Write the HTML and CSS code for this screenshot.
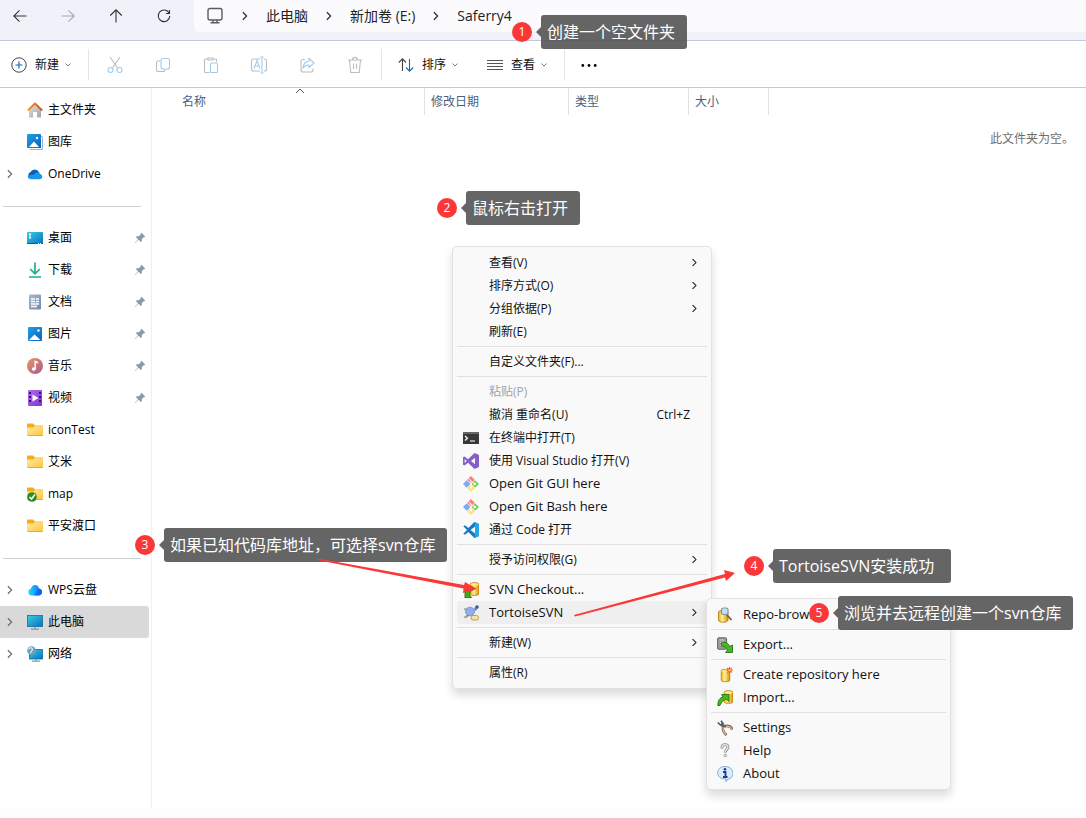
FILE: index.html
```html
<!DOCTYPE html>
<html lang="zh-CN">
<head>
  <meta charset="UTF-8" />
  <meta name="viewport" content="width=device-width, initial-scale=1" />
  <title>Saferry4</title>
  <link rel="stylesheet" href="styles.css">
</head>
<body>
  <!-- shared icons -->
  <svg class="defs" width="0" height="0" aria-hidden="true">
    <defs>
      <linearGradient id="gBlue" x1="0" y1="0" x2="1" y2="1"><stop offset="0" stop-color="#1fa0e8" /><stop offset="1" stop-color="#0a63bd" /></linearGradient>
      <linearGradient id="gTeal" x1="0" y1="0" x2="1" y2="1"><stop offset="0" stop-color="#35d0e4" /><stop offset="1" stop-color="#0c6fc0" /></linearGradient>
      <linearGradient id="gFolder" x1="0" y1="0" x2="1" y2="1"><stop offset="0" stop-color="#ffe9a6" /><stop offset="1" stop-color="#fcc53a" /></linearGradient>
      <linearGradient id="gHome" x1="0" y1="0" x2="1" y2="1"><stop offset="0" stop-color="#e2e2e2" /><stop offset="1" stop-color="#a4a4a4" /></linearGradient>
      <linearGradient id="gRoof" x1="0" y1="0" x2="1" y2="0"><stop offset="0" stop-color="#f59a2d" /><stop offset="1" stop-color="#dc4f1c" /></linearGradient>
      <linearGradient id="gMusic" x1="0" y1="0" x2="1" y2="1"><stop offset="0" stop-color="#f0935a" /><stop offset="1" stop-color="#a55a9c" /></linearGradient>
      <linearGradient id="gVideo" x1="0" y1="0" x2="1" y2="1"><stop offset="0" stop-color="#b46cf0" /><stop offset="1" stop-color="#7a35d0" /></linearGradient>
      <linearGradient id="gDoc" x1="0" y1="0" x2="1" y2="1"><stop offset="0" stop-color="#a9bccd" /><stop offset="1" stop-color="#6f8aa6" /></linearGradient>
      <linearGradient id="gDb" x1="0" y1="0" x2="1" y2="0"><stop offset="0" stop-color="#f2b211" /><stop offset=".4" stop-color="#ffef96" /><stop offset="1" stop-color="#dc9107" /></linearGradient>
      <linearGradient id="gWps" x1="0" y1="0" x2="1" y2="0"><stop offset="0" stop-color="#1ee0e6" /><stop offset=".5" stop-color="#1c9bff" /><stop offset="1" stop-color="#0b5cf0" /></linearGradient>
    </defs>
    <symbol id="i-right" viewBox="0 0 8 8"><path d="M2.300 1 5.300 4 2.300 7" fill="none" stroke="currentColor" stroke-width=".9" /></symbol>
    <symbol id="i-down" viewBox="0 0 8 8"><path d="M1.500 2.500 4 5l2.500-2.500" fill="none" stroke="currentColor" /></symbol>
    <symbol id="i-pin" viewBox="0 0 12 12"><path d="M7.500.8 11.200 4.500l-.8.8-.7-.1-2 2 .1 2-.9.9-2.400-2.300L1.300 11 .9 10.700l3.200-3.300-2.300-2.300.9-.9 2.100.1 2-2-.1-.7z" fill="#8d99a3" /></symbol>
    <symbol id="i-folder" viewBox="0 0 16 16"><path d="M0 2.500A1 1 0 0 1 1 1.500h5l2 2h7a1 1 0 0 1 1 1V8H0z" fill="#f5ad12" /><path d="M0 5.500h6.500L8 4h7.500a.5.5 0 0 1 .5.500V13a1 1 0 0 1-1 1H1a1 1 0 0 1-1-1z" fill="url(#gFolder)" /><path d="M.5 13.500h15" stroke="#e6a51c" stroke-width=".8" /></symbol>
    <symbol id="i-git" viewBox="0 0 16 16">
      <path d="M8 0l3.800 3.800L8 7.600 4.200 3.800z" fill="#ff7f7f" /><path d="M3.800 4.200 7.600 8l-3.800 3.800L0 8z" fill="#7baaf7" />
      <path d="M8 8.400l3.800 3.800L8 16l-3.800-3.800z" fill="#ffe27a" /><path d="M12.200 4.200 16 8l-3.800 3.800L8.400 8z" fill="#80cf5c" />
      <path d="M5.500 2.500 8 5v6M8 5l3.500 3" fill="none" stroke="#fff" stroke-width=".9" /><circle cx="11.800" cy="8" r="1.200" fill="#fff" /><circle cx="8" cy="11.500" r="1.100" fill="#fff" />
    </symbol>
    <symbol id="i-db" viewBox="0 0 10 14"><path d="M.5 2.500C.5 0 9.500 0 9.500 2.500v9c0 2.500-9 2.500-9 0z" fill="url(#gDb)" stroke="#b07608" stroke-width=".8" /><ellipse cx="5" cy="2.600" rx="4" ry="1.400" fill="#ffe773" /></symbol>
  </svg>

  <header class="nav">
    <button class="nav-btn" aria-label="后退"><svg width="16" height="16" viewBox="0 0 16 16"><path d="M14.500 8H2M7.500 2.300 1.800 8l5.700 5.700" /></svg></button>
    <button class="nav-btn off" aria-label="前进"><svg width="16" height="16" viewBox="0 0 16 16"><path d="M1.500 8H14M8.500 2.300 14.200 8l-5.700 5.700" /></svg></button>
    <button class="nav-btn" aria-label="向上"><svg width="16" height="16" viewBox="0 0 16 16"><path d="M8 14.500V2M2.300 7.500 8 1.800l5.700 5.700" /></svg></button>
    <button class="nav-btn" aria-label="刷新"><svg width="16" height="16" viewBox="0 0 16 16"><path d="M13.200 5.200A5.800 5.800 0 1 0 13.800 8M13.500 2v3.500H10" /></svg></button>
    <nav class="address">
      <svg width="18" height="18" viewBox="0 0 18 18" fill="none" stroke="#5c5c5c" stroke-width="1.400"><rect x="2" y="1.500" width="14" height="11.500" rx="2" /><path d="M7 13v2.500M11 13v2.500M4.500 15.800h9" /></svg>
      <svg class="sep" width="10" height="10"><use href="#i-right" /></svg>
      <a href="#">此电脑</a>
      <svg class="sep" width="10" height="10"><use href="#i-right" /></svg>
      <a href="#">新加卷 (E:)</a>
      <svg class="sep" width="10" height="10"><use href="#i-right" /></svg>
      <a href="#">Saferry4</a>
    </nav>
  </header>

  <div class="toolbar">
    <div class="group group-new">
      <button class="tool"><svg width="16" height="16" viewBox="0 0 16 16" fill="none"><circle cx="8" cy="8" r="7.200" stroke="#444" /><path d="M8 4.500v7M4.500 8h7" stroke="#0b6cc4" stroke-width="1.200" /></svg>新建<svg width="8" height="8" class="drop"><use href="#i-down" /></svg></button>
    </div>
    <div class="group group-edit">
      <button class="icon-btn" disabled aria-label="剪切"><svg width="16" height="18" viewBox="0 0 16 18"><path d="M3 1l7.500 11M13 1 5.500 12" /><g class="b"><circle cx="3.500" cy="14" r="2.500" /><circle cx="12.500" cy="14" r="2.500" /></g></svg></button>
      <button class="icon-btn" disabled aria-label="复制"><svg width="16" height="18" viewBox="0 0 16 18"><path d="M5 5H3.500a2 2 0 0 0-2 2v6.500a2 2 0 0 0 2 2H8a2 2 0 0 0 2-2" /><rect class="b" x="6" y="2.500" width="8.500" height="10.500" rx="2" /></svg></button>
      <button class="icon-btn" disabled aria-label="粘贴"><svg width="16" height="18" viewBox="0 0 16 18"><path d="M6.500 16.500h-4a1 1 0 0 1-1-1V4a1 1 0 0 1 1-1H5M10 3h2.500a1 1 0 0 1 1 1v2M5 2h5v2H5z" /><rect class="b" x="7.500" y="7" width="7" height="9.500" rx="1" /></svg></button>
      <button class="icon-btn" disabled aria-label="重命名"><svg width="18" height="18" viewBox="0 0 18 18"><path d="M10 3H3.500a2 2 0 0 0-2 2v8a2 2 0 0 0 2 2H10M14 3h.5a2 2 0 0 1 2 2v8a2 2 0 0 1-2 2H14" /><path class="b" d="M12 1v16M10.500 1h3M10.500 17h3M4 12.500l3-8 3 8M5 10h4" /></svg></button>
      <button class="icon-btn" disabled aria-label="共享"><svg width="16" height="18" viewBox="0 0 16 18"><path d="M6 3.500H4a2 2 0 0 0-2 2V14a2 2 0 0 0 2 2h8a2 2 0 0 0 2-2v-1.500" /><path class="b" d="M10 2.500 15 7l-5 4.500V9c-3 0-4.500 1-6 3 .3-4 2.300-6.500 6-7z" /></svg></button>
      <button class="icon-btn" disabled aria-label="删除"><svg width="16" height="18" viewBox="0 0 16 18"><path d="M1 4h14M5.500 4c0-3.500 5-3.500 5 0M2.500 4l1.300 12.500h8.400L13.500 4M6.500 7.500v5.500M9.500 7.500v5.500" /></svg></button>
    </div>
    <div class="group group-view">
      <button class="tool"><svg width="16" height="16" viewBox="0 0 16 16" fill="none" stroke-width="1.100"><path d="M4.500 14V2M.8 5.500 4.500 1.800l3.500 3.700" stroke="#444" /><path d="M11.500 2v12M8 10.500l3.500 3.700 3.700-3.700" stroke="#0b6cc4" /></svg>排序<svg width="8" height="8" class="drop"><use href="#i-down" /></svg></button>
      <button class="tool"><svg width="16" height="16" viewBox="0 0 16 16" stroke="#555"><path d="M0 3.500h16M0 6.500h16M0 9.500h16M0 12.500h16" /></svg>查看<svg width="8" height="8" class="drop"><use href="#i-down" /></svg></button>
    </div>
    <button class="tool more" aria-label="更多"><svg width="16" height="16" viewBox="0 0 16 16"><circle cx="1.800" cy="8.500" r="1.400" /><circle cx="8" cy="8.500" r="1.400" /><circle cx="14.200" cy="8.500" r="1.400" /></svg></button>
  </div>

  <div class="content">
    <aside class="sidebar">
      <a class="place" href="#"><svg class="icon" viewBox="0 0 16 16"><path d="M2 7l6-5.500L14 7v8.500h-4V10H6v5.500H2z" fill="url(#gHome)" /><path d="M.8 8.500 8 1.500l7.200 7" fill="none" stroke="url(#gRoof)" stroke-width="2" stroke-linejoin="round" /></svg>主文件夹</a>
      <a class="place" href="#"><svg class="icon" viewBox="0 0 16 16"><path d="M3 2.500h12.500v13H3z" fill="#1c6fc0" /><path d="M2.500 14.500h12V3" fill="none" stroke="#fff" /><rect width="14" height="14" rx="1" fill="url(#gBlue)" /><path d="M2 13l5-5.500 5 5.500z" fill="#fff" /><circle cx="10" cy="4" r="1.200" fill="#fff" /></svg>图库</a>
      <a class="place" href="#"><svg class="arrow" viewBox="0 0 8 8"><use href="#i-right" /></svg><svg class="icon" viewBox="0 0 16 16"><path d="M3.500 12.500a3.500 3.500 0 0 1 0-6.500A4.800 4.800 0 0 1 12 6l1 5z" fill="#0f5fb8" /><path d="M7 8.500C9 5.500 12.500 6 13 8a2.700 2.700 0 0 1 .2 5.300H4C1 13 .5 11 1 9.500z" fill="#1a96e8" /></svg>OneDrive</a>
      <hr>
      <a class="place" href="#"><svg class="icon" viewBox="0 0 16 16"><rect y="2" width="16" height="12" rx="1" fill="url(#gTeal)" /><path d="M2 4.500h2M2 7.500h2" stroke="#fff" stroke-width="1.800" /><path d="M0 13.500h16" stroke="#0b5c9c" /><path d="M11 13.500h1M13 13.500h1" stroke="#fff" /></svg>桌面<svg class="pin"><use href="#i-pin" /></svg></a>
      <a class="place" href="#"><svg class="icon" viewBox="0 0 16 16" fill="none" stroke="#1cae8c" stroke-width="1.700"><path d="M8 .5v11M3.200 7 8 11.800 12.800 7M2 15h12" /></svg>下载<svg class="pin"><use href="#i-pin" /></svg></a>
      <a class="place" href="#"><svg class="icon" viewBox="0 0 16 16"><rect x="2" y=".5" width="12" height="15" rx="1" fill="url(#gDoc)" /><path d="M4 5h4M4 7.500h4M4 10h8M4 12.500h6M9 5h3M9 7.500h3" stroke="#fff" stroke-width="1.300" /></svg>文档<svg class="pin"><use href="#i-pin" /></svg></a>
      <a class="place" href="#"><svg class="icon" viewBox="0 0 16 16"><rect x="1" y="1" width="14" height="14" rx="1" fill="url(#gBlue)" /><path d="M2 14l5.500-5.500L13.500 14z" fill="#fff" /><circle cx="11.500" cy="4.500" r="1.200" fill="#fff" /></svg>图片<svg class="pin"><use href="#i-pin" /></svg></a>
      <a class="place" href="#"><svg class="icon" viewBox="0 0 16 16"><circle cx="8" cy="8" r="8" fill="url(#gMusic)" /><ellipse cx="6.800" cy="11" rx="2" ry="1.700" fill="#fff" /><path d="M8.200 11V3.500l2.800 1.300" fill="none" stroke="#fff" stroke-width="1.500" /></svg>音乐<svg class="pin"><use href="#i-pin" /></svg></a>
      <a class="place" href="#"><svg class="icon" viewBox="0 0 16 16"><rect x="1" width="14" height="16" rx="1" fill="url(#gVideo)" /><path d="M3 2v12M13 2v12" stroke="#3b1377" stroke-width="2" stroke-dasharray="2 2" /><path d="M5.500 4.500 11.500 8l-6 3.500z" fill="#fff" /></svg>视频<svg class="pin"><use href="#i-pin" /></svg></a>
      <a class="place" href="#"><svg class="icon"><use href="#i-folder" /></svg>iconTest</a>
      <a class="place" href="#"><svg class="icon"><use href="#i-folder" /></svg>艾米</a>
      <a class="place" href="#"><svg class="icon" viewBox="0 0 16 16"><use href="#i-folder" width="16" height="16" /><circle cx="5" cy="11" r="4.800" fill="#2d8a1c" /><path d="M2.500 11l2 2L8 8.500" fill="none" stroke="#fff" stroke-width="1.600" /></svg>map</a>
      <a class="place" href="#"><svg class="icon"><use href="#i-folder" /></svg>平安渡口</a>
      <hr>
      <a class="place" href="#"><svg class="arrow" viewBox="0 0 8 8"><use href="#i-right" /></svg><svg class="icon" viewBox="0 0 16 16"><path d="M4.500 13.500a3.500 3.500 0 0 1-.7-6.800C4.500 2 11 1.500 12 6.500c4 .5 4 6.500 0 7z" fill="url(#gWps)" /><path d="M7 13.500 12 6.500c4 .5 4 6.500 0 7z" fill="#0d5bee" opacity=".6" /></svg>WPS云盘</a>
      <a class="place active" href="#"><svg class="arrow" viewBox="0 0 8 8"><use href="#i-right" /></svg><svg class="icon" viewBox="0 0 16 16"><rect x=".5" y="1.500" width="15" height="11" fill="url(#gTeal)" stroke="#0e6ea0" stroke-width=".8" /><path d="M8 13v2M4 15.200h8" stroke="#8696a3" stroke-width="1.200" /></svg>此电脑</a>
      <a class="place" href="#"><svg class="arrow" viewBox="0 0 8 8"><use href="#i-right" /></svg><svg class="icon" viewBox="0 0 16 16"><rect x="2.500" y="3.500" width="13" height="9.500" fill="url(#gTeal)" stroke="#0e6ea0" stroke-width=".8" /><path d="M9 13v2M5 15.200h8" stroke="#8696a3" stroke-width="1.200" /><circle cx="4.500" cy="4.500" r="4.300" fill="#6d9dbb" /><path d="M1.500 3.500C3 1 5 1.500 5.500 3S3 5.500 3.500 7.500" fill="none" stroke="#cfe6f2" stroke-width="1.400" /></svg>网络</a>
    </aside>

    <main class="files">
      <table>
        <thead>
          <tr>
            <th class="col-name">名称<svg class="caret" width="10" height="6" viewBox="0 0 10 6"><path d="M1 5l4-4 4 4" fill="none" stroke="#555" /></svg></th>
            <th class="col-date">修改日期</th>
            <th class="col-type">类型</th>
            <th class="col-size">大小</th>
            <th class="col-rest"></th>
          </tr>
        </thead>
        <tbody>
          <tr><td class="empty" colspan="5">此文件夹为空。</td></tr>
        </tbody>
      </table>
    </main>
  </div>
  <footer class="status"></footer>

  <ul class="menu main-menu">
    <li><button><span class="ico"></span>查看(V)<svg class="more-arrow"><use href="#i-right" /></svg></button></li>
    <li><button><span class="ico"></span>排序方式(O)<svg class="more-arrow"><use href="#i-right" /></svg></button></li>
    <li><button><span class="ico"></span>分组依据(P)<svg class="more-arrow"><use href="#i-right" /></svg></button></li>
    <li><button><span class="ico"></span>刷新(E)</button></li>
    <li class="line"></li>
    <li><button><span class="ico"></span>自定义文件夹(F)...</button></li>
    <li class="line"></li>
    <li><button disabled><span class="ico"></span>粘贴(P)</button></li>
    <li><button><span class="ico"></span>撤消 重命名(U)<span class="key">Ctrl+Z</span></button></li>
    <li><button><svg class="ico" viewBox="0 0 16 16"><rect y="2" width="16" height="12" fill="#383838" /><path d="M0 2h16v2H0z" fill="#666" /><path d="M2 6l2.500 2.300L2 10.500M7 11h5" fill="none" stroke="#fff" stroke-width="1.200" /></svg>在终端中打开(T)</button></li>
    <li><button><svg class="ico" viewBox="0 0 16 16"><path d="M11.500 0 16 2v12l-4.500 2L5 9.800 1.500 12.500 0 11.800V4.200l1.500-.7L5 6.200zM12 4.800 8 8l4 3.200zM1.700 6v4L3.700 8z" fill="#865fc5" fill-rule="evenodd" /></svg>使用 Visual Studio 打开(V)</button></li>
    <li><button class="latin"><svg class="ico"><use href="#i-git" /></svg>Open Git GUI here</button></li>
    <li><button class="latin"><svg class="ico"><use href="#i-git" /></svg>Open Git Bash here</button></li>
    <li><button><svg class="ico" viewBox="0 0 16 16"><path d="M11.500 0 16 2v12l-4.500 2L5.300 10 2 12.700.3 11.800 4 8 .3 4.200 2 3.300 5.300 6zM12 4.500 7.500 8l4.500 3.500z" fill="#1379c0" fill-rule="evenodd" /><path d="M12 .2 16 2v12l-4 1.800z" fill="#27a3e8" /></svg>通过 Code 打开</button></li>
    <li class="line"></li>
    <li><button><span class="ico"></span>授予访问权限(G)<svg class="more-arrow"><use href="#i-right" /></svg></button></li>
    <li class="line"></li>
    <li><button class="latin"><svg class="ico" viewBox="0 0 16 16"><use href="#i-db" x="6.500" y="0" width="10" height="14" /><path d="M10 5C8 5 5 6.500 4.500 10L2 8.500V16h6.500L6.500 12.500C7 10 8 8.500 10 8z" fill="#3fae14" stroke="#17670a" stroke-width=".8" /></svg>SVN Checkout...</button></li>
    <li class="open">
      <button class="latin"><svg class="ico" viewBox="0 0 16 16"><path d="M2 4l3 2M11.500 4l3-2.500M2.500 12.500l3-3M12 5.500l2-3" stroke="#6b86b5" stroke-width="2" /><circle cx="14" cy="2" r="1.800" fill="#39688e" /><ellipse cx="7" cy="6.500" rx="4.500" ry="4.300" fill="#91aeea" stroke="#6680bd" stroke-width=".7" /><path d="M1 3.500 3 5M1 12.500l3-1.500" stroke="#a7a7a7" stroke-width="1.500" /><rect x="8" y="10.500" width="7.500" height="4.500" rx="2" fill="#f8e39a" stroke="#a98a4b" stroke-width=".8" /></svg>TortoiseSVN<svg class="more-arrow"><use href="#i-right" /></svg></button>
      <ul class="menu sub-menu">
        <li><button class="latin"><svg class="ico" viewBox="0 0 16 16"><path d="M1.500 5C1.500 3 11 3 11 5v8c0 3-9.500 3-9.500 0z" fill="url(#gDb)" stroke="#b07608" stroke-width=".8" /><path d="M10 8l4.500 5" stroke="#7c583a" stroke-width="1.800" /><rect x="4.500" y="1" width="6.500" height="6.500" rx="2" fill="#c8e0f4" stroke="#7b94ac" stroke-width="1.200" /></svg>Repo-browser</button></li>
        <li class="line"></li>
        <li><button class="latin"><svg class="ico" viewBox="0 0 16 16"><rect x=".6" y=".8" width="9" height="11.500" rx="1" fill="#999" stroke="#666" /><path d="M2.500 3h5M2.500 5.500h5M2.500 8h3" stroke="#cfcfcf" /><path d="M4 6c4-1.500 7.500 0 8.500 3.500L15.500 8v7.500H8.500L10.500 13C9.500 10.500 7.500 9.500 4.500 9z" fill="#4ab81c" stroke="#176a0b" stroke-width=".8" /></svg>Export...</button></li>
        <li class="line"></li>
        <li><button class="latin"><svg class="ico" viewBox="0 0 16 16"><use href="#i-db" x="3.500" y="1.500" width="10" height="14" /><path d="M12.500 0v6.500M9.300 3.300h6.500M10.300 1l4.500 4.500M14.800 1l-4.500 4.500" stroke="#f3552c" stroke-width="1.100" /><circle cx="12.500" cy="3.300" r="1.200" fill="#ffc64b" /></svg>Create repository here</button></li>
        <li><button class="latin"><svg class="ico" viewBox="0 0 16 16"><use href="#i-db" x="6.500" y="0" width="10" height="14" /><path d="M.8 15.500C.8 10 3 7.500 6 7L4.500 4.500H12v7L9.500 9.500C6.500 9.500 4.500 12 3 15.500z" fill="#4ab81c" stroke="#176a0b" stroke-width=".8" /></svg>Import...</button></li>
        <li class="line"></li>
        <li><button class="latin"><svg class="ico" viewBox="0 0 16 16" fill="none"><path d="M4.500 4.500C7 7 7.500 6 9 6c3-.5 5 1 6.500 3.500M6 5c-.5 4-.5 7 3.500 10" stroke="#6e5a42" stroke-width="2.600" /><path d="M9 6.300c3-.5 4.500.7 6 3M6 7c-.3 3 .5 5.500 3.200 7.500" stroke="#dcc095" stroke-width="1.300" /><path d="M.8 2.500 3.500 5 6 3.500 4 .8" stroke="#42587f" stroke-width="1.700" /></svg>Settings</button></li>
        <li><button class="latin"><svg class="ico" viewBox="0 0 16 16" fill="none"><path d="M5 5.500V4c0-3.200 6-3.200 6 0 0 2.500-2.700 2.500-2.700 5.500" stroke="#878787" stroke-width="2.800" /><path d="M5 5V4c0-3.200 6-3.200 6 0 0 2.500-2.700 2.500-2.700 5" stroke="#eee" stroke-width="1.200" /><circle cx="8.300" cy="12.500" r="1.300" fill="#eee" stroke="#878787" stroke-width=".8" /></svg>Help</button></li>
        <li><button class="latin"><svg class="ico" viewBox="0 0 16 16"><path d="M8 .5c10 0 10 12 3 12.500L9 15.800V13C-2 13.500-2 .5 8 .5z" fill="#dcecfb" stroke="#7ba3cf" stroke-width=".9" /><circle cx="8" cy="3.200" r="1.300" fill="#153a9c" /><path d="M6 6h2.500v5M6 11h4.500" fill="none" stroke="#153a9c" stroke-width="1.800" /></svg>About</button></li>
      </ul>
    </li>
    <li class="line"></li>
    <li><button><span class="ico"></span>新建(W)<svg class="more-arrow"><use href="#i-right" /></svg></button></li>
    <li class="line"></li>
    <li><button><span class="ico"></span>属性(R)</button></li>
  </ul>

  <!-- step notes -->
  <div class="note note-1"><span class="num">1</span><span class="tip">创建一个空文件夹</span></div>
  <div class="note note-2"><span class="num">2</span><span class="tip">鼠标右击打开</span></div>
  <div class="note note-3"><span class="num">3</span><span class="tip">如果已知代码库地址，可选择svn仓库</span></div>
  <div class="note note-4"><span class="num">4</span><span class="tip">TortoiseSVN安装成功</span></div>
  <div class="note note-5"><span class="num">5</span><span class="tip">浏览并去远程创建一个svn仓库</span></div>
  <svg class="pointer pointer-checkout" width="164" height="40" viewBox="0 0 164 40"><path d="M0 0 6 .3 148 26l1-3 12 7-14 4 .5-4.500L6 2z" fill="#fb3838" /></svg>
  <svg class="pointer pointer-svn" width="164" height="50" viewBox="0 0 164 50"><path d="M0 45 151 4l-1-4 11 3-9 8-1-3.500L1 46.500z" fill="#fb3838" /></svg>
</body>
</html>
```
FILE: styles.css
```css
* {
  box-sizing: border-box;
}
body {
  margin: 0;
  font-family: "Open Sans", "Noto Sans CJK SC", sans-serif;
  font-size: 12px;
  line-height: 16px;
  color: #111;
  background: #fff;
  position: relative;
  display: flex;
  flex-direction: column;
  min-height: 100vh;
}
button {
  border: none;
  background: none;
  padding: 0;
  font: inherit;
  color: inherit;
}
a {
  color: inherit;
  text-decoration: none;
}
svg {
  flex: none;
}
.defs {
  position: absolute;
}

/* top bar */
.nav {
  display: flex;
  align-items: flex-start;
  gap: 8px;
  height: 41px;
  background: #f1f2f9;
  border-bottom: 1px solid #c6c7d9;
}
.nav-btn {
  display: flex;
  align-items: center;
  justify-content: center;
  width: 40px;
  height: 32px;
}
.nav-btn svg {
  fill: none;
  stroke: #333;
  stroke-width: 1.1;
}
.nav-btn.off svg {
  stroke: #a5a6ad;
}
.address {
  flex: 1;
  display: flex;
  align-items: center;
  height: 32px;
  margin-left: 2px;
  padding-left: 12px;
  background: #fbfbfe;
  border-radius: 0 0 0 5px;
  font-size: 14px;
  color: #222;
}
.address .sep {
  margin: 0 16px;
}

/* toolbar */
.toolbar {
  display: flex;
  align-items: center;
  height: 47px;
  border-bottom: 1px solid #c6c7d9;
}
.group {
  display: flex;
  align-items: center;
  height: 31px;
  border-right: 1px solid #e4e4ea;
}
.group-new {
  width: 89px;
  padding-left: 11px;
}
.group-edit {
  padding: 0 2px;
}
.group-view {
  gap: 28px;
  padding: 0 16px;
}
.tool {
  display: flex;
  align-items: center;
  gap: 8px;
  height: 31px;
  padding-top: 2px;
}
.tool .drop {
  margin-left: -3px;
  color: #777;
}
.more {
  padding-left: 16px;
}
.icon-btn {
  display: flex;
  align-items: center;
  justify-content: center;
  width: 48px;
  height: 31px;
  padding-top: 2px;
}
.icon-btn svg {
  fill: none;
  stroke: #bdbdbd;
  stroke-width: 1.1;
}
.icon-btn .b {
  stroke: #9bcdf3;
}

/* folder tree */
.content {
  flex: 1;
  display: flex;
}
.sidebar {
  width: 152px;
  padding: 6px 2px 0 0;
  border-right: 1px solid #f0f0f0;
}
.place {
  display: flex;
  align-items: center;
  position: relative;
  height: 32px;
  padding: 0 3px 0 27px;
  color: #000;
}
.place.active {
  background: #d9d9d9;
  border-radius: 0 3px 3px 0;
}
.place .icon {
  width: 16px;
  height: 16px;
  margin-right: 5px;
}
.place .arrow {
  width: 10px;
  height: 10px;
  margin: 0 12px 0 -22px;
  color: #666;
}
.place .pin {
  width: 12px;
  height: 12px;
  margin-left: auto;
}
.sidebar hr {
  height: 1px;
  margin: 16px 8px 15px 3px;
  border: none;
  background: #cfcfcf;
}

/* file list */
.files {
  flex: 1;
  padding-left: 24px;
}
table {
  width: 100%;
  border-collapse: separate;
  border-spacing: 0;
  table-layout: fixed;
}
th {
  position: relative;
  height: 27px;
  padding: 0 0 0 6px;
  border-right: 1px solid #e2e2e2;
  text-align: left;
  font-weight: normal;
  color: #4c607a;
}
.col-name {
  width: 249px;
}
.col-date {
  width: 144px;
}
.col-type {
  width: 120px;
}
.col-size {
  width: 80px;
}
.col-rest {
  border-right: none;
}
.caret {
  position: absolute;
  top: 0;
  left: 50%;
  margin-left: -5px;
}
.empty {
  padding: 16px 12px 0 0;
  text-align: right;
  color: #6d6d6d;
}
.status {
  height: 10px;
  background: #fdfdfd;
}

/* context menu */
.menu {
  position: absolute;
  margin: 0;
  padding: 4px;
  list-style: none;
  background: #f9f9f9;
  border: 1px solid #e2e2e2;
  border-radius: 5px;
  box-shadow: 0 6px 10px rgba(0, 0, 0, 0.14);
}
.main-menu {
  left: 452px;
  top: 246px;
  width: 260px;
}
.sub-menu {
  left: calc(100% - 1px);
  top: -3px;
  width: 245px;
}
.menu li {
  position: relative;
}
.menu button {
  display: flex;
  align-items: center;
  width: 100%;
  height: 23px;
  padding: 0 8px 0 6px;
  border-radius: 3px;
  text-align: left;
  white-space: pre;
}
.menu button:disabled {
  color: #a3a3a3;
}
.menu .latin {
  font-size: 13px;
  line-height: 15px;
}
.menu .open > button {
  background: #efefef;
}
.menu .line {
  height: 1px;
  margin: 3px 0;
  background: #e0e0e0;
}
.ico {
  flex: none;
  width: 16px;
  height: 16px;
  margin-right: 10px;
}
.key {
  margin-left: auto;
  padding-right: 9px;
}
.more-arrow {
  width: 9px;
  height: 9px;
  margin-left: auto;
}

/* step notes */
.note {
  position: absolute;
  display: flex;
  align-items: center;
  gap: 9px;
}
.num {
  width: 20px;
  height: 20px;
  border-radius: 50%;
  background: #fb3838;
  color: #fff;
  line-height: 20px;
  text-align: center;
}
.tip {
  position: relative;
  height: 34px;
  padding: 0 12px 0 6px;
  border-radius: 3px;
  background: rgba(84, 84, 84, 0.9);
  color: #fff;
  font-size: 16px;
  line-height: 34px;
  white-space: nowrap;
}
.tip::before {
  content: "";
  position: absolute;
  left: -5px;
  top: 12px;
  border: 5px solid transparent;
  border-left: none;
  border-right-color: rgba(84, 84, 84, 0.9);
}
.note-1 {
  left: 512px;
  top: 15px;
}
.note-2 {
  left: 437px;
  top: 191px;
}
.note-3 {
  left: 135px;
  top: 528px;
}
.note-4 {
  left: 744px;
  top: 549px;
}
.note-4 .tip {
  min-width: 178px;
}
.note-5 {
  left: 809px;
  top: 596px;
}
.pointer {
  position: absolute;
}
.pointer-checkout {
  left: 316px;
  top: 559px;
}
.pointer-svn {
  left: 574px;
  top: 570px;
}
```
